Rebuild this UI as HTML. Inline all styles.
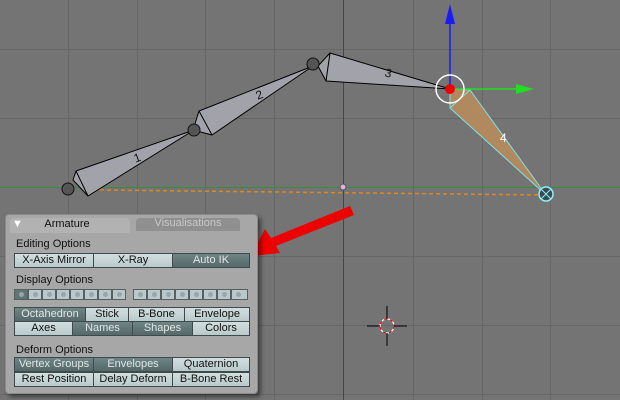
<!DOCTYPE html><html><head><style>
body{margin:0;width:620px;height:400px;overflow:hidden;background:#747474;font-family:"Liberation Sans",sans-serif}
.p{position:absolute;left:5px;top:214px;width:253px;height:180px;background:#a7a7a7;border-radius:4px;box-shadow:3px 3px 4px rgba(0,0,0,.45);border:1px solid #8a8a8a;box-sizing:border-box}
.b{position:absolute;box-sizing:border-box;height:15px;border:1px solid #3e4a4b;background:linear-gradient(#d2dedf,#b9cacc);font-size:11px;text-align:center;line-height:13px;color:#111;white-space:nowrap;overflow:hidden}
.d{background:linear-gradient(#6e8485,#56696a);color:#dfe6e6}
.l{position:absolute;font-size:11px;color:#111;left:16px}
.t{position:absolute;font-size:11px;text-align:center;line-height:15px}
.dot{position:absolute;top:289px;width:14px;height:11px;box-sizing:border-box;border:1px solid #55605f;background:#b9c8ca}
.dot:after{content:"";position:absolute;left:4px;top:2px;width:5px;height:5px;border-radius:50%;background:#97a6a7}
</style></head><body>
<svg width="620" height="400" style="position:absolute;left:0;top:0">
<g stroke="#666" stroke-width="1">
<path d="M68.5 0V400M137.5 0V400M205.5 0V400M274.5 0V400M413.5 0V400M482.5 0V400M550.5 0V400M0 49.5H620M0 118.5H620M0 256.5H620M0 325.5H620M0 394.5H620"/>
</g>
<path d="M343.5 0V400" stroke="#3a3aa8"/>
<path d="M0 187.5H620" stroke="#3c8a3c"/>
<path d="M100 190L546 195" stroke="#d88a20" stroke-dasharray="4 3" stroke-width="1.5"/>
<circle cx="343" cy="187" r="3" fill="#e0b0e0" stroke="#555"/>
<g stroke="#000" stroke-width="1" stroke-linejoin="round">
<polygon points="76,171 194,130 88,196 73,180" fill="#a2a2aa"/>
<line x1="76" y1="171" x2="88" y2="196"/>
<polygon points="199,111 313,66 212,135 193,130" fill="#a2a2aa"/>
<line x1="199" y1="111" x2="212" y2="135"/>
<polygon points="330,53 450,89 326,81 318,66" fill="#a2a2aa"/>
<line x1="330" y1="53" x2="326" y2="81"/>
</g>
<circle cx="68" cy="189" r="6" fill="#555" stroke="#111"/>
<circle cx="194" cy="130" r="6" fill="#555" stroke="#111"/>
<circle cx="313" cy="64" r="6" fill="#555" stroke="#111"/>
<polygon points="450,89 470,90 546,195 450,108" fill="#b08a5e" stroke="#7fe0e8" stroke-width="1"/>
<line x1="470" y1="90" x2="450" y2="108" stroke="#7fe0e8"/>
<circle cx="546" cy="194" r="7" fill="#3a4a50" stroke="#8ef0f8" stroke-width="1.5"/>
<path d="M541 189L551 199M551 189L541 199" stroke="#8ef0f8"/>
<line x1="450" y1="89" x2="450" y2="20" stroke="#1a1aff" stroke-width="1.5"/>
<polygon points="450,4 445,24 455,24" fill="#1a1aff"/>
<line x1="450" y1="89" x2="520" y2="89" stroke="#22dd22" stroke-width="1.5"/>
<polygon points="534,89 516,84 516,94" fill="#22dd22"/>
<circle cx="450" cy="89" r="14" fill="none" stroke="#fff" stroke-width="1.5"/>
<circle cx="450" cy="89" r="5" fill="#e00"/>
<g font-family="Liberation Sans" font-size="12"><text x="134" y="162" fill="#111" transform="rotate(-20 137 158)">1</text><text x="256" y="99" fill="#111" transform="rotate(-22 259 95)">2</text><text x="385" y="77" fill="#111" transform="rotate(15 388 73)">3</text><text x="500" y="142" fill="#fff">4</text></g>
<circle cx="387" cy="326" r="7" fill="none" stroke="#fff" stroke-width="1.2"/>
<circle cx="387" cy="326" r="7" fill="none" stroke="#e00" stroke-width="1.2" stroke-dasharray="3 3"/>
<path d="M387 306V319M387 333V346M367 326H380M394 326H407" stroke="#000"/>
<polygon points="350,206 354,215 276,246 280,253 251,256 265,229 271,238" fill="#e00"/>
</svg>
<div class="p"></div>
<div style="position:absolute;left:10px;top:218px;width:120px;height:15px;background:#b2b2b2;border-radius:4px 4px 0 0"></div>
<div style="position:absolute;left:136px;top:218px;width:104px;height:13px;background:#909090;border-radius:4px 4px 0 0"></div>
<div class="t" style="left:12px;top:217px;color:#fff">▼</div>
<div class="t" style="left:32px;top:217px;width:70px;color:#111">Armature</div>
<div class="t" style="left:136px;top:216px;width:104px;color:#c8c8c8">Visualisations</div>
<div class="l" style="top:238px">Editing Options</div>
<div class="b" style="left:14px;top:253px;width:80px">X-Axis Mirror</div>
<div class="b" style="left:93px;top:253px;width:80px">X-Ray</div>
<div class="b d" style="left:172px;top:253px;width:78px">Auto IK</div>
<div class="l" style="top:274px">Display Options</div>
<div class="dot" style="left:14px;background:#5e7475"></div><div class="dot" style="left:28px"></div><div class="dot" style="left:42px"></div><div class="dot" style="left:56px"></div><div class="dot" style="left:70px"></div><div class="dot" style="left:84px"></div><div class="dot" style="left:98px"></div><div class="dot" style="left:112px"></div>
<div class="dot" style="left:133px"></div><div class="dot" style="left:147px"></div><div class="dot" style="left:161px"></div><div class="dot" style="left:175px"></div><div class="dot" style="left:189px"></div><div class="dot" style="left:203px"></div><div class="dot" style="left:217px"></div><div class="dot" style="left:231px;width:17px"></div>
<div class="b d" style="left:14px;top:307px;width:72px">Octahedron</div>
<div class="b" style="left:85px;top:307px;width:44px">Stick</div>
<div class="b" style="left:128px;top:307px;width:57px">B-Bone</div>
<div class="b" style="left:184px;top:307px;width:66px">Envelope</div>
<div class="b" style="left:14px;top:321px;width:59px">Axes</div>
<div class="b d" style="left:72px;top:321px;width:61px">Names</div>
<div class="b d" style="left:132px;top:321px;width:61px">Shapes</div>
<div class="b" style="left:192px;top:321px;width:58px">Colors</div>
<div class="l" style="top:344px">Deform Options</div>
<div class="b d" style="left:14px;top:357px;width:80px">Vertex Groups</div>
<div class="b d" style="left:93px;top:357px;width:80px">Envelopes</div>
<div class="b" style="left:172px;top:357px;width:78px">Quaternion</div>
<div class="b" style="left:14px;top:372px;width:80px">Rest Position</div>
<div class="b" style="left:93px;top:372px;width:80px">Delay Deform</div>
<div class="b" style="left:172px;top:372px;width:78px">B-Bone Rest</div>
</body></html>
